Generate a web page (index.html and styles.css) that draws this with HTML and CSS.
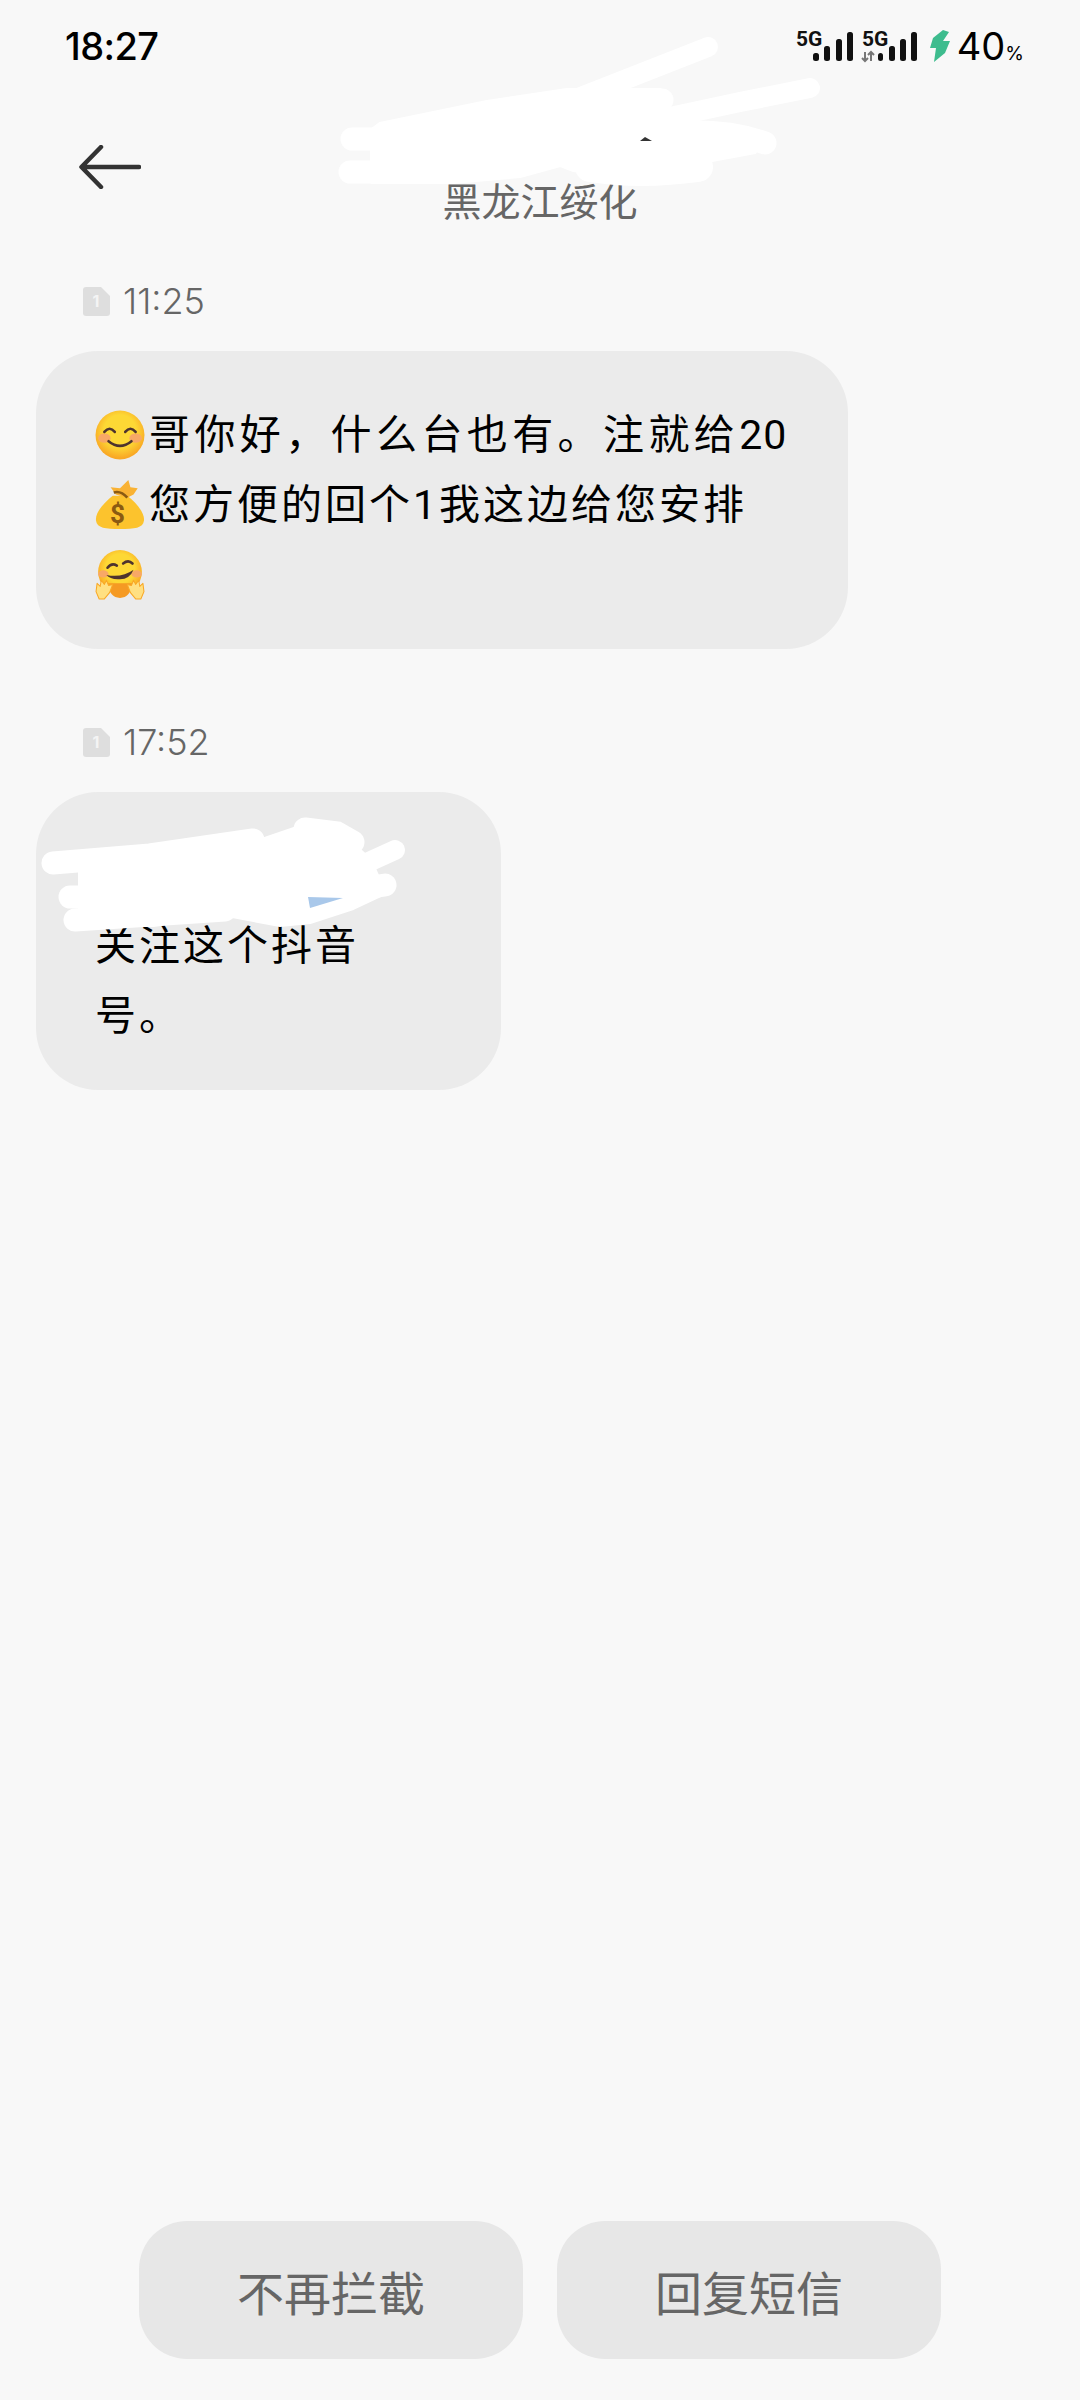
FILE: index.html
```html
<!DOCTYPE html>
<html lang="zh-CN">

<head>
    <meta charset="UTF-8" />
    <meta name="viewport" content="width=device-width, initial-scale=1.0" />
    <title>短信</title>
    <link rel="stylesheet" href="styles.css">
</head>

<body>
    <div class="page">
        <div class="statusBar">
            <span class="clock">18:27</span>
            <div class="statusIcons">
                <svg class="signal" width="124" height="42" viewBox="0 -6 124 42">
                    <text class="signalLabel" x="0" y="15">5G</text>
                    <rect x="17" y="22" width="6" height="8" rx="2.5" />
                    <rect x="28" y="15" width="6" height="15" rx="2.5" />
                    <rect x="40" y="8" width="6" height="22" rx="2.5" />
                    <rect x="51" y="1" width="6" height="29" rx="2.5" />
                    <text class="signalLabel" x="66" y="15">5G</text>
                    <path class="dataArrows" d="M69 21v9M66 27l3 3 3-3M75 30v-9M72 24l3-3 3 3" />
                    <rect x="82" y="22" width="5" height="8" rx="2.5" />
                    <rect x="93" y="15" width="6" height="15" rx="2.5" />
                    <rect x="104" y="8" width="6" height="22" rx="2.5" />
                    <rect x="115" y="1" width="6" height="29" rx="2.5" />
                </svg>
                <svg class="bolt" width="20" height="32" viewBox="0 0 20 32">
                    <path d="M13 0 3 8 0 18H6L4 32 15 23 20 11H13L19 2z" />
                </svg>
                <span class="battery">40<small>%</small></span>
            </div>
        </div>

        <header class="topBar">
            <svg class="backIcon" width="62" height="44" viewBox="0 0 62 44">
                <path d="M60 22H3M22 2 2.500 22 22 42" />
            </svg>
            <div class="region">黑龙江绥化</div>
        </header>

        <main class="messages">
            <section class="message">
                <div class="msgTime">
                    <svg class="simIcon" width="27" height="29" viewBox="0 0 27 29">
                        <path class="simBody" d="M3 0h15l9 9v17a3 3 0 0 1-3 3H3a3 3 0 0 1-3-3V3a3 3 0 0 1 3-3z" />
                        <text class="simNum" x="13" y="20">1</text>
                    </svg>
                    <span>11:25</span>
                </div>
                <p class="bubble bubbleWide">
                    <svg class="emoji" viewBox="0 0 48 48">
                        <defs>
                            <radialGradient id="faceFill" cx="50%" cy="42%" r="55%">
                                <stop offset="0.6" stop-color="#fdd835" />
                                <stop offset="1" stop-color="#f9a825" />
                            </radialGradient>
                        </defs>
                        <circle cx="24" cy="24" r="23.500" fill="url(#faceFill)" />
                        <ellipse cx="9" cy="27" rx="6" ry="4.500" fill="#f8a866" />
                        <ellipse cx="39" cy="27" rx="6" ry="4.500" fill="#f8a866" />
                        <path class="emojiLine" d="M9 21q5-6 10 0M29 21q5-6 10 0" />
                        <path class="emojiLine" d="M13 30q11 9 22 0" />
                    </svg><span class="looseLine">哥你好，什么台也有。注就给<span class="nums">20</span></span><br>
                    <svg class="emoji" viewBox="0 0 48 48">
                        <path d="M17 15C7 23 0 32 1 39 2 46 10 47 24 47 38 47 46 46 47 39 48 32 40 22 31 15z" fill="#fcc32d" />
                        <path d="M20 14 15 7 24 8 32 0 34 7 41 8 37 14 31 17z" fill="#f9b233" />
                        <path d="M18 12Q25 10 31 17" fill="none" stroke="#8a5a12" stroke-width="2.500" />
                        <text class="dollar" x="23" y="41">$</text>
                    </svg>您方便的回个1我这边给您安排<br>
                    <svg class="emoji" viewBox="0 0 48 48">
                        <circle cx="24" cy="21" r="21" fill="url(#faceFill)" />
                        <path d="M12 32Q14 46 24 46 34 46 36 32z" fill="#f59a23" />
                        <ellipse cx="8" cy="23" rx="5" ry="3.500" fill="#f8a866" />
                        <ellipse cx="40" cy="23" rx="5" ry="3.500" fill="#f8a866" />
                        <path class="emojiLine" d="M12 17q4-5 9-2M27 13q5-4 9 0" />
                        <path d="M11 24Q26 27 37 19 33 29 22 28 14 28 11 24z" fill="#4e342e" />
                        <path class="hand" d="M1 40 2 32 5 35 6 29 9 33 11 29 13 34 17 33 14 41 9 47H4z" />
                        <path class="hand" d="M47 40 46 32 43 35 42 29 39 33 37 29 35 34 31 33 34 41 39 47H44z" />
                    </svg>
                </p>
            </section>

            <section class="message">
                <div class="msgTime">
                    <svg class="simIcon" width="27" height="29" viewBox="0 0 27 29">
                        <path class="simBody" d="M3 0h15l9 9v17a3 3 0 0 1-3 3H3a3 3 0 0 1-3-3V3a3 3 0 0 1 3-3z" />
                        <text class="simNum" x="13" y="20">1</text>
                    </svg>
                    <span>17:52</span>
                </div>
                <p class="bubble bubbleNarrow">&nbsp;<br>关注这个抖音<br>号。</p>
            </section>
        </main>

        <footer class="actions">
            <button type="button" class="actionButton">不再拦截</button>
            <button type="button" class="actionButton">回复短信</button>
        </footer>

        <!-- white pen marks drawn over the screenshot -->
        <svg class="scribbles" width="1080" height="2400" viewBox="0 0 1080 2400">
            <path class="pen penThin" d="M573 100 708 47" />
            <path class="pen penThin" d="M670 117 740 102 810 88" />
            <path class="pen" d="M352 139H400" />
            <path class="pen" d="M350 172H400" />
            <path class="pen" d="M640 100H662" />
            <path class="pen" d="M680 132Q730 130 765 143" />
            <path class="pen penWide" d="M590 167Q640 175 698 167" />
            <path class="penBlob" d="M380 124 487 102 567 90 660 90 672 122 755 135 755 152 712 160 690 176 653 180 573 170 560 165 520 176 453 182 372 182 372 130z" />
            <path fill="#333" d="M640 141 645 137 652 141z" />

            <path class="pen" d="M53 863 150 855 253 840" />
            <path class="pen" d="M70 897H200" />
            <path class="pen" d="M75 920 225 910" />
            <path class="pen penThin" d="M395 850 340 875" />
            <path class="pen" d="M385 885 320 895" />
            <path class="pen" d="M305 829 337 833 353 842" />
            <path class="penBlob" d="M72 868 253 843 303 826 337 830 370 860 385 893 353 908 310 922 280 925 227 915 153 925 80 925 80 870z" />
            <path fill="#a9c8ea" d="M308 897 343 898 310 908z" />
        </svg>
    </div>
</body>

</html>
```

FILE: styles.css
```css
:root {
    --page-bg: #f8f8f8;
    --bubble-bg: #ebebeb;
    --button-bg: #e7e7e7;
    --muted: #666;
}

* {
    box-sizing: border-box;
}

body {
    margin: 0;
    background: var(--page-bg);
    color: #000;
    font-family: Roboto, "Noto Sans CJK SC", sans-serif;
}

.page {
    position: relative;
    display: flex;
    flex-direction: column;
    width: 1080px;
    height: 2400px;
    overflow: hidden;
}

.statusBar {
    display: flex;
    justify-content: space-between;
    align-items: center;
    height: 92px;
    padding: 0 56px 0 65px;
}

.clock {
    font-family: Inter, sans-serif;
    font-size: 38px;
    font-weight: 500;
    letter-spacing: -0.6px;
}

.statusIcons {
    display: flex;
    align-items: center;
    gap: 7px;
}

.signal {
    margin-right: 3px;
}

.signal rect {
    fill: #111;
}

.signalLabel {
    font-size: 21px;
    font-weight: 700;
    fill: #111;
}

.dataArrows {
    fill: none;
    stroke: #777;
    stroke-width: 2;
}

.bolt path {
    fill: #3ebc8e;
}

.battery {
    font-family: Inter, sans-serif;
    font-size: 38px;
    font-weight: 400;
}

.battery small {
    font-size: 19px;
}

.topBar {
    position: relative;
    display: flex;
    flex-direction: column;
    align-items: center;
    height: 148px;
    padding-top: 84px;
}

.backIcon {
    position: absolute;
    left: 79px;
    top: 53px;
    fill: none;
    stroke: #333;
    stroke-width: 4.500;
    stroke-linecap: round;
    stroke-linejoin: round;
}

.region {
    font-size: 39px;
    line-height: 54px;
    color: var(--muted);
}

.messages {
    flex: 1;
    padding: 0 36px;
}

.message {
    margin-bottom: 32px;
}

.msgTime {
    display: flex;
    align-items: center;
    gap: 13px;
    height: 111px;
    padding: 11px 0 0 47px;
    font-family: Inter, sans-serif;
    font-size: 36px;
    font-weight: 300;
    color: #666;
}

.simBody {
    fill: #dedede;
}

.simNum {
    font-size: 16px;
    font-weight: 700;
    fill: #f4f4f4;
    text-anchor: middle;
}

.bubble {
    margin: 0;
    padding: 49px 20px 39px 59px;
    background: var(--bubble-bg);
    border-radius: 62px;
    font-size: 41px;
    line-height: 70px;
    letter-spacing: 3px;
    white-space: nowrap;
}

.bubbleWide {
    width: 812px;
}

.bubbleNarrow {
    width: 465px;
}

.looseLine {
    letter-spacing: 4.4px;
}

.nums {
    letter-spacing: 1px;
}

.emoji {
    display: inline-block;
    width: 50px;
    height: 50px;
    margin-right: 4px;
    vertical-align: -11px;
}

.emojiLine {
    fill: none;
    stroke: #4e342e;
    stroke-width: 2.500;
    stroke-linecap: round;
}

.hand {
    fill: #ffe082;
    stroke: #f9a825;
    stroke-width: 1;
    stroke-linejoin: round;
}

.dollar {
    font-size: 25px;
    font-weight: 700;
    fill: #8a5a12;
    text-anchor: middle;
}

.actions {
    display: flex;
    justify-content: center;
    gap: 34px;
    padding-bottom: 41px;
}

.actionButton {
    width: 384px;
    height: 138px;
    padding: 0;
    border: none;
    border-radius: 48px;
    background: var(--button-bg);
    color: var(--muted);
    font-family: inherit;
    font-size: 47px;
}

.scribbles {
    position: absolute;
    left: 0;
    top: 0;
    pointer-events: none;
}

.pen {
    fill: none;
    stroke: #fff;
    stroke-width: 23px;
    stroke-linecap: round;
}

.penThin {
    stroke-width: 20px;
}

.penWide {
    stroke-width: 30px;
}

.penBlob {
    fill: #fff;
    stroke: #fff;
    stroke-width: 4px;
    stroke-linejoin: round;
}
```
